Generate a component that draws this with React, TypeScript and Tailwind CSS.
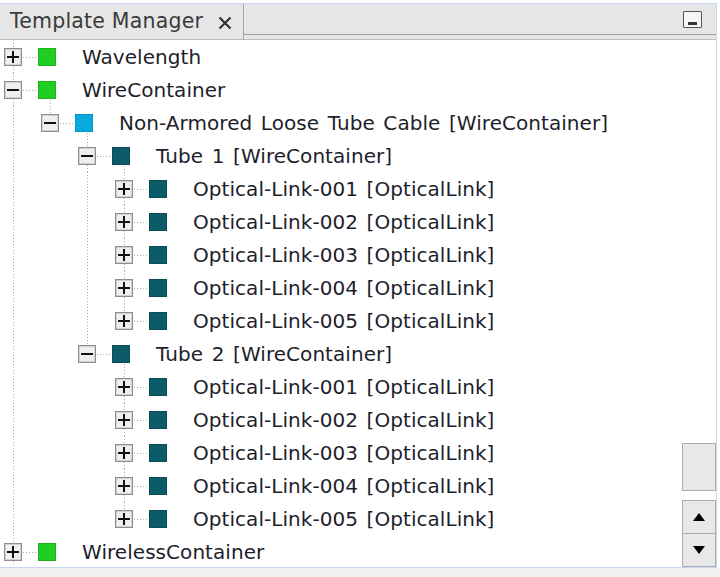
import React from 'react';

type Node = {
  label: string;
  level: number;
  color: string;
  border: string;
  state: 'plus' | 'minus';
  next: boolean;
  guides: boolean[];
};

const GREEN = ['#21cd21', '#1bb51b'];
const CYAN = ['#0aa9dc', '#0996c4'];
const TEAL = ['#0c5b69', '#0a4c58'];

const links = (guides: boolean[]): Node[] =>
  ['001', '002', '003', '004', '005'].map((n, i) => ({
    label: `Optical-Link-${n} [OpticalLink]`,
    level: 3,
    color: TEAL[0],
    border: TEAL[1],
    state: 'plus',
    next: i < 4,
    guides,
  }));

const rows: Node[] = [
  { label: 'Wavelength', level: 0, color: GREEN[0], border: GREEN[1], state: 'plus', next: true, guides: [] },
  { label: 'WireContainer', level: 0, color: GREEN[0], border: GREEN[1], state: 'minus', next: true, guides: [] },
  {
    label: 'Non-Armored Loose Tube Cable [WireContainer]',
    level: 1,
    color: CYAN[0],
    border: CYAN[1],
    state: 'minus',
    next: false,
    guides: [true],
  },
  { label: 'Tube 1 [WireContainer]', level: 2, color: TEAL[0], border: TEAL[1], state: 'minus', next: true, guides: [true, false] },
  ...links([true, false, true]),
  { label: 'Tube 2 [WireContainer]', level: 2, color: TEAL[0], border: TEAL[1], state: 'minus', next: false, guides: [true, false] },
  ...links([true, false, false]),
  { label: 'WirelessContainer', level: 0, color: GREEN[0], border: GREEN[1], state: 'plus', next: true, guides: [] },
];

const DOT = '#a9a9a9';

const Guide = ({ on }: { on: boolean }) => (
  <svg width="37" height="33" className="shrink-0">
    {on && <line x1="13.5" y1="0" x2="13.5" y2="33" stroke={DOT} strokeDasharray="1 2" />}
  </svg>
);

const Expander = ({ open, down }: { open: boolean; down: boolean }) => (
  <svg width="37" height="33" className="shrink-0">
    <line x1="13.5" y1="0" x2="13.5" y2="8" stroke={DOT} strokeDasharray="1 2" />
    {down && <line x1="13.5" y1="26" x2="13.5" y2="33" stroke={DOT} strokeDasharray="1 2" />}
    <line x1="23" y1="17.5" x2="37" y2="17.5" stroke={DOT} strokeDasharray="1 2" />
    <rect x="4.5" y="8.5" width="17" height="17" fill="#efefef" stroke="#8e8e8e" />
    <rect x="5.5" y="9.5" width="15" height="15" fill="none" stroke="#d2d2d2" />
    <line x1="7" y1="17" x2="19" y2="17" stroke="#111" strokeWidth="2" />
    {!open && <line x1="13" y1="11" x2="13" y2="23" stroke="#111" strokeWidth="2" />}
  </svg>
);

const NodeIcon = ({ color, border, open }: { color: string; border: string; open: boolean }) => (
  <svg width="45" height="33" className="shrink-0">
    <rect x="1.5" y="8.5" width="17" height="17" fill={color} stroke={border} />
    {open && <line x1="13.5" y1="27" x2="13.5" y2="33" stroke={DOT} strokeDasharray="1 2" />}
  </svg>
);

const Row = ({ node }: { node: Node }) => (
  <div className="flex h-[33px] shrink-0 items-center">
    {node.guides.map((g, i) => (
      <Guide key={i} on={g} />
    ))}
    <Expander open={node.state === 'minus'} down={node.next} />
    <NodeIcon color={node.color} border={node.border} open={node.state === 'minus'} />
    <span className="whitespace-nowrap text-[20px] leading-none tracking-[0.05px] [word-spacing:2.2px] text-[#1e1e2c]">
      {node.label}
    </span>
  </div>
);

export default function App() {
  return (
    <div
      className="flex h-[577px] w-[720px] flex-col overflow-hidden bg-white"
      style={{ fontFamily: '"DejaVu Sans", Verdana, sans-serif' }}
    >
      <div className="h-[3px] shrink-0 bg-white" />

      <div className="flex h-[565px] w-[717px] shrink-0 flex-col border-y border-r border-[#c6d7ee]">
        {/* header */}
        <div className="flex h-[36px] shrink-0 bg-[#e6e6e6]">
          <div className="flex w-[243px] items-center border-b border-[#bdbdbd] pl-[10px]">
            <span className="text-[20.5px] leading-none tracking-[0.2px] text-[#3a3a3a]">Template Manager</span>
            <svg width="14" height="14" className="ml-[15px] mt-[2px]">
              <path d="M1.5 1.5 L12.5 12.5 M12.5 1.5 L1.5 12.5" stroke="#333" strokeWidth="2.2" />
            </svg>
          </div>
          <div className="flex flex-1 flex-col border-l border-[#a6a6a6]">
            <div className="flex h-[31px] items-center justify-end border-b border-[#a0a0a0] pr-[14px]">
              <div className="flex h-[17px] w-[19px] items-end justify-center rounded-[1px] border border-[#555] bg-[#f6f6f6] pb-[2px]">
                <div className="h-[3px] w-[9px] bg-[#333]" />
              </div>
            </div>
            <div className="flex-1 border-b border-[#bdbdbd] bg-[#e6e6e6]" />
          </div>
        </div>

        {/* body */}
        <div className="flex min-h-0 flex-1">
          <div className="flex min-w-0 flex-1 flex-col overflow-hidden">
            {rows.map((r, i) => (
              <Row key={i} node={r} />
            ))}
          </div>
          <div className="flex w-[34px] shrink-0 flex-col justify-end">
            <div className="mb-[9px] h-[48px] border border-[#adadad] bg-[#e8e8e8]" />
            <div className="flex h-[34px] items-center justify-center border border-[#adadad] bg-[#e8e8e8]">
              <svg width="12" height="8">
                <path d="M0 8 L6 0 L12 8 Z" fill="#000" />
              </svg>
            </div>
            <div className="flex h-[33px] items-center justify-center border border-t-0 border-[#adadad] bg-[#e8e8e8]">
              <svg width="12" height="8">
                <path d="M0 0 L12 0 L6 8 Z" fill="#000" />
              </svg>
            </div>
          </div>
        </div>
      </div>

      <div className="flex-1 bg-[#f0f0f0]" />
    </div>
  );
}
